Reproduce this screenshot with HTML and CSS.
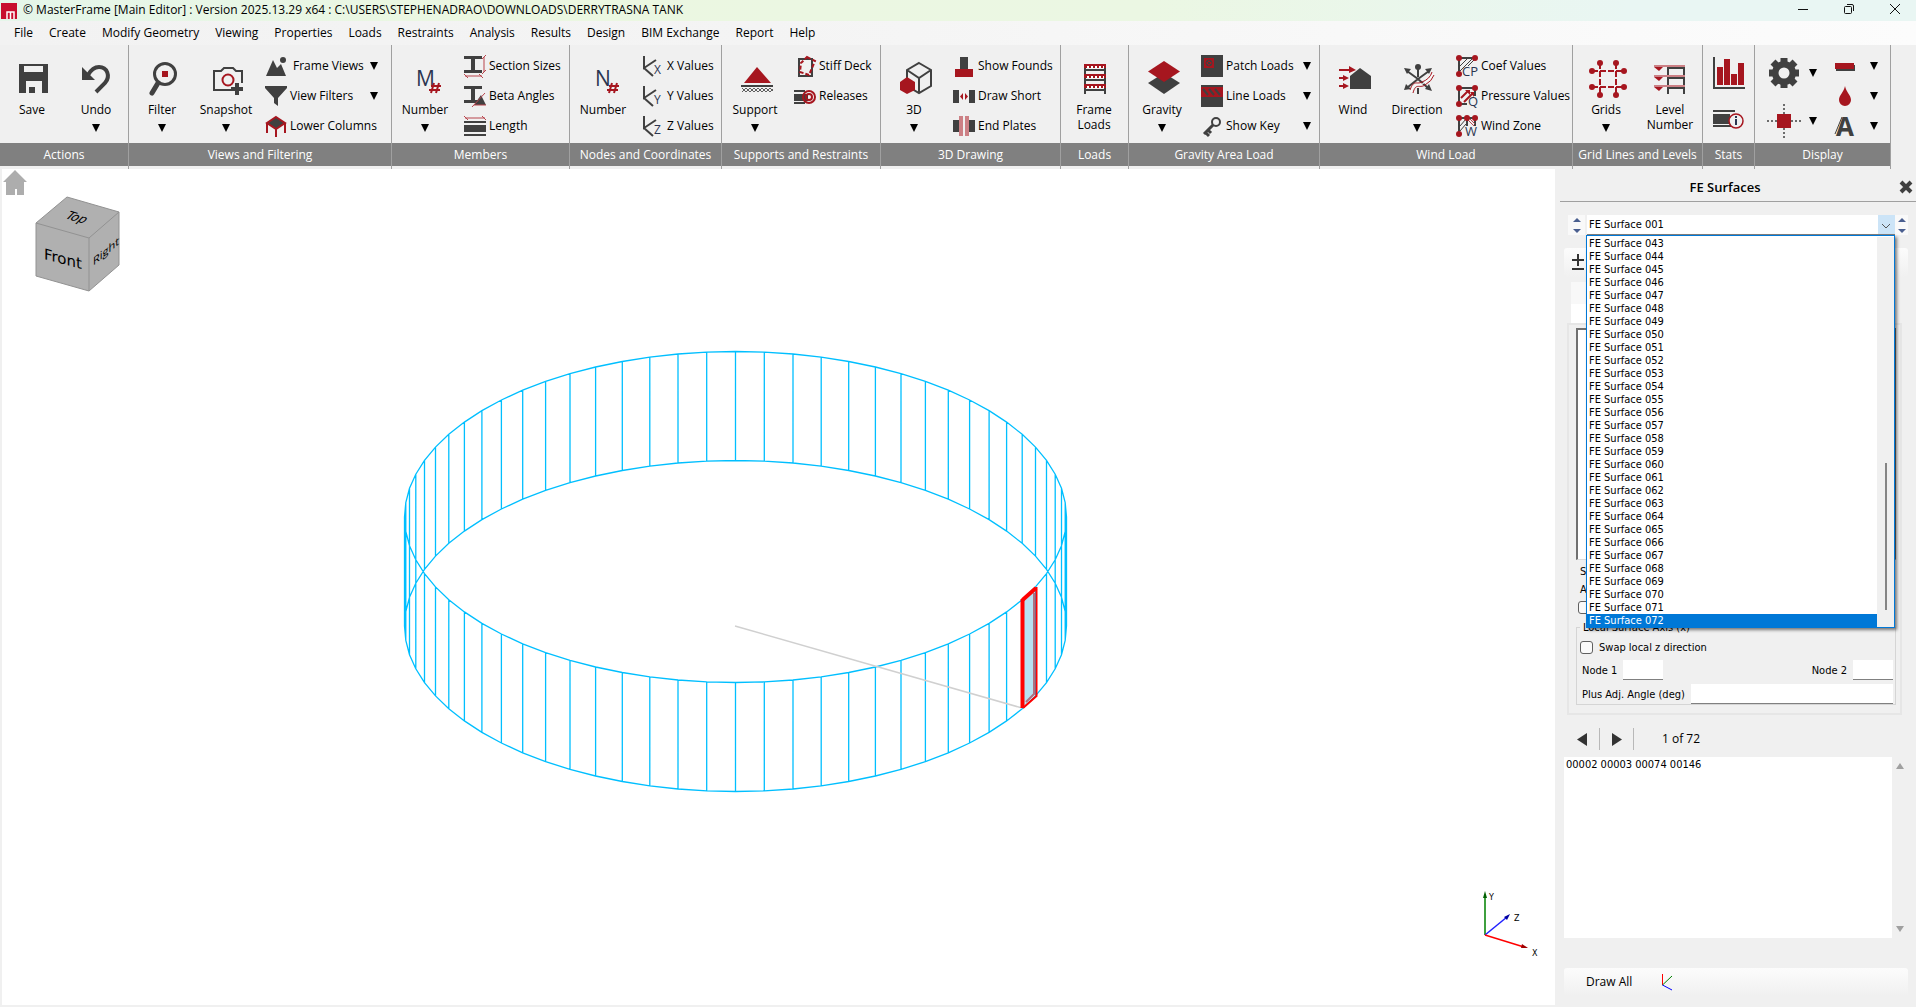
FILE: index.html
```html
<!DOCTYPE html>
<html lang="en">
<head>
<meta charset="utf-8">
<title>MasterFrame [Main Editor]</title>
<link rel="stylesheet" href="styles.css">
</head>
<body>
<svg class="defs" width="0" height="0" aria-hidden="true">
  <symbol id="down" viewBox="0 0 9 9"><path d="M0 0H9L4.500 9Z"/></symbol>
  <symbol id="beam" viewBox="0 0 22 22"><path class="ink" d="M0 1H18V4H11V15H18V18H0V15H7V4H0Z"/></symbol>
  <symbol id="axes" viewBox="0 0 22 22"><path class="line" d="M2 1V13L14 5M2 13L11 21"/></symbol>
</svg>

<header class="titlebar">
  <svg class="logo" viewBox="0 0 16 16"><path fill="#c8102e" d="M0 0H16V16H0Z"/><path d="M6 16V9H13V16M9.500 9V16" fill="none" stroke="#fff" stroke-width="1.500"/></svg>
  <h1>© MasterFrame [Main Editor] : Version 2025.13.29 x64 : C:\USERS\STEPHENADRAO\DOWNLOADS\DERRYTRASNA TANK</h1>
  <div class="window-controls">
    <button aria-label="Minimize"><svg viewBox="0 0 12 12"><path d="M1 6.500H11"/></svg></button>
    <button aria-label="Restore"><svg viewBox="0 0 12 12"><rect x="1.500" y="3.500" width="7" height="7" rx="1"/><path d="M4 1.500H9Q10.500 1.500 10.500 3V8"/></svg></button>
    <button aria-label="Close"><svg viewBox="0 0 12 12"><path d="M1 1L11 11M11 1L1 11"/></svg></button>
  </div>
</header>

<nav class="menubar">
  <a href="#">File</a><a href="#">Create</a><a href="#">Modify Geometry</a><a href="#">Viewing</a><a href="#">Properties</a><a href="#">Loads</a><a href="#">Restraints</a><a href="#">Analysis</a><a href="#">Results</a><a href="#">Design</a><a href="#">BIM Exchange</a><a href="#">Report</a><a href="#">Help</a>
</nav>

<div class="ribbon">
  <section class="group">
    <div class="tools">
      <button class="big"><svg viewBox="0 0 36 36"><path class="ink" fill-rule="evenodd" d="M5 3H34V32H28V20H12V32H5ZM10 5V11H29V5ZM15 26H21V32H15Z"/></svg><span>Save</span></button>
      <button class="big"><svg viewBox="0 0 36 36"><path class="ink" d="M4 6V19H17Z"/><path d="M10 14C14 7 18 6 21 6C29 6 33 15 27 22L18 31" fill="none" stroke="#404040" stroke-width="4"/></svg><span>Undo</span><svg class="arrow"><use href="#down"/></svg></button>
    </div>
    <h2>Actions</h2>
  </section>

  <section class="group">
    <div class="tools">
      <button class="big"><svg viewBox="0 0 36 36"><circle cx="21" cy="13" r="10.500" fill="none" stroke="#404040" stroke-width="3"/><path class="red" d="M18 10H24V16H18Z"/><path d="M14 22L8 32" stroke="#404040" stroke-width="5" stroke-linecap="round"/></svg><span>Filter</span><svg class="arrow"><use href="#down"/></svg></button>
      <button class="big"><svg viewBox="0 0 36 36"><path class="line" d="M24 29H6V10H13L16 7H25L28 10H34V22"/><circle cx="20" cy="19" r="5.500" fill="none" stroke="#a6161f" stroke-width="2"/><path d="M29 22V34M23 28H35" stroke="#404040" stroke-width="4"/></svg><span>Snapshot</span><svg class="arrow"><use href="#down"/></svg></button>
      <div class="stack">
        <button class="small wide-gap"><svg viewBox="0 0 22 22"><path class="ink" d="M1 21L8 5L12 13L16 9L21 21Z"/><circle class="ink" cx="18" cy="5" r="3"/></svg><span>Frame Views</span><svg class="arrow"><use href="#down"/></svg></button>
        <button class="small"><svg viewBox="0 0 22 22"><path class="ink" d="M0 1H22V3L13 13V21L9 18V13L0 3Z"/></svg><span>View Filters</span><svg class="arrow"><use href="#down"/></svg></button>
        <button class="small"><svg viewBox="0 0 22 22"><path d="M11 2L20 8L11 14L2 8Z" fill="#404040" stroke="#a6161f" stroke-width="2"/><path d="M2 8V18M11 14V22M20 8V18" stroke="#a6161f" stroke-width="2"/></svg><span>Lower Columns</span></button>
      </div>
    </div>
    <h2>Views and Filtering</h2>
  </section>

  <section class="group">
    <div class="tools">
      <button class="big"><svg viewBox="0 0 36 36"><text class="glyph" x="9" y="25">M</text><path class="hash" d="M27 22L24 32M32 22L29 32M24 25H34M22 29H33"/></svg><span>Number</span><svg class="arrow"><use href="#down"/></svg></button>
      <div class="stack">
        <button class="small"><svg viewBox="0 0 22 22"><use href="#beam"/><path class="thin" d="M20 2V17M18 4L22 0M18 19L22 15M1 21H18M0 19L4 23M15 19L19 23"/></svg><span>Section Sizes</span></button>
        <button class="small"><svg viewBox="0 0 22 22"><use href="#beam"/><path class="ink" d="M17 10L22 20H10Z"/><path class="thin" d="M8 22L21 8M10 20H22"/></svg><span>Beta Angles</span></button>
        <button class="small"><svg viewBox="0 0 22 22"><path class="thin" d="M1 3H21M0 1L4 5M18 1L22 5"/><path class="ink" d="M0 6H22V8H0ZM0 10H22V17H0ZM0 19H22V21H0Z"/></svg><span>Length</span></button>
      </div>
    </div>
    <h2>Members</h2>
  </section>

  <section class="group">
    <div class="tools">
      <button class="big"><svg viewBox="0 0 36 36"><text class="glyph" x="10" y="25">N</text><path class="hash" d="M27 22L24 32M32 22L29 32M24 25H34M22 29H33"/></svg><span>Number</span></button>
      <div class="stack">
        <button class="small"><svg viewBox="0 0 22 22"><use href="#axes"/><text class="sub" x="12" y="19">X</text></svg><span>X Values</span></button>
        <button class="small"><svg viewBox="0 0 22 22"><use href="#axes"/><text class="sub" x="12" y="19">Y</text></svg><span>Y Values</span></button>
        <button class="small"><svg viewBox="0 0 22 22"><use href="#axes"/><text class="sub" x="12" y="19">Z</text></svg><span>Z Values</span></button>
      </div>
    </div>
    <h2>Nodes and Coordinates</h2>
  </section>

  <section class="group">
    <div class="tools">
      <button class="big"><svg viewBox="0 0 36 36"><path class="red" d="M20 6L34 22H7Z"/><path class="line" d="M4 25H36"/><path d="M5 27L9 31L13 27L17 31L21 27L25 31L29 27L33 31L36 28M5 31L9 27L13 31L17 27L21 31L25 27L29 31L33 27L36 30" fill="none" stroke="#606060"/></svg><span>Support</span><svg class="arrow"><use href="#down"/></svg></button>
      <div class="stack">
        <button class="small"><svg viewBox="0 0 22 22"><path class="line" d="M5 4H18V21H5Z"/><path d="M13 2L21 6L15 20L6 17L7 8Z" fill="none" stroke="#a6161f" stroke-width="2" stroke-dasharray="4 2"/></svg><span>Stiff Deck</span></button>
        <button class="small"><svg viewBox="0 0 22 22"><path class="ink" d="M0 5H11V7H0ZM0 9H14V16H0ZM0 17H11V19H0Z"/><circle cx="15" cy="12" r="6" fill="none" stroke="#a6161f" stroke-width="2"/><circle cx="15" cy="12" r="3" fill="none" stroke="#a6161f" stroke-width="2"/></svg><span>Releases</span></button>
      </div>
    </div>
    <h2>Supports and Restraints</h2>
  </section>

  <section class="group">
    <div class="tools">
      <button class="big"><svg viewBox="0 0 36 36"><path class="line" d="M23 2L35 9V25L23 32L11 25V9ZM11 9L23 17L35 9M23 17V32"/><path class="red" d="M11 16L19 21V29L11 33L4 29V21Z"/></svg><span>3D</span><svg class="arrow"><use href="#down"/></svg></button>
      <div class="stack">
        <button class="small"><svg viewBox="0 0 22 22"><path class="ink" d="M7 2H15V14H7Z"/><path class="red" d="M2 14H20V22H2Z"/></svg><span>Show Founds</span></button>
        <button class="small"><svg viewBox="0 0 22 22"><path class="ink" d="M0 5H6V18H0ZM16 5H22V18H16Z"/><path class="red" d="M10 8V15L7 11.500ZM12 8V15L15 11.500Z"/></svg><span>Draw Short</span></button>
        <button class="small"><svg viewBox="0 0 22 22"><path class="ink" d="M0 5H6V17H0ZM16 5H22V17H16Z"/><path fill="#cc8085" d="M6 1H10V21H6ZM12 1H16V21H12Z"/></svg><span>End Plates</span></button>
      </div>
    </div>
    <h2>3D Drawing</h2>
  </section>

  <section class="group">
    <div class="tools">
      <button class="big"><svg viewBox="0 0 36 36"><path class="line" d="M9 4V33M29 4V33M9 9H29M9 19H29M9 29H29"/><path d="M8 5H30M8 15H30M8 25H30" stroke="#a6161f" stroke-width="4"/><path d="M11 6H28M11 16H28M11 26H28" stroke="#fff" stroke-width="2" stroke-dasharray="2 2"/></svg><span>Frame<br>Loads</span></button>
    </div>
    <h2>Loads</h2>
  </section>

  <section class="group">
    <div class="tools">
      <button class="big"><svg viewBox="0 0 36 36"><path class="ink" d="M20 12L36 22L20 33L4 22Z"/><path class="red" d="M20 0L36 10.500L20 21L4 10.500Z"/></svg><span>Gravity</span><svg class="arrow"><use href="#down"/></svg></button>
      <div class="stack tight">
        <button class="small"><svg viewBox="0 0 22 22"><path class="ink" d="M0 0H22V22H0Z"/><path class="red" d="M3 3H13V13H3Z"/><circle cx="8" cy="8" r="3" fill="none" stroke="#404040"/><path d="M6 6L10 10M10 6L6 10" stroke="#404040"/></svg><span>Patch Loads</span><svg class="arrow"><use href="#down"/></svg></button>
        <button class="small"><svg viewBox="0 0 22 22"><path class="ink" d="M0 0H22V22H0Z"/><path class="red" d="M0 2H22V12H0Z"/><path d="M2 4L7 10M8 4L13 10M14 4L19 10" stroke="#404040" stroke-width="2"/></svg><span>Line Loads</span><svg class="arrow"><use href="#down"/></svg></button>
        <button class="small"><svg viewBox="0 0 22 22"><circle class="line" cx="15" cy="7" r="4"/><path d="M12 10L3 19M7 15L10 18M4 17L8 21" stroke="#404040" stroke-width="3"/></svg><span>Show Key</span><svg class="arrow"><use href="#down"/></svg></button>
      </div>
    </div>
    <h2>Gravity Area Load</h2>
  </section>

  <section class="group">
    <div class="tools">
      <button class="big"><svg viewBox="0 0 36 36"><path class="ink" d="M25 7L36 15V28H15V15Z"/><path d="M4 9H16M4 17H10M4 25H10" stroke="#a6161f" stroke-width="2"/><path class="red" d="M14 5L21 9L14 12ZM8 14L14 17L8 20ZM8 22L14 25L8 28Z"/></svg><span>Wind</span></button>
      <button class="big"><svg viewBox="0 0 36 36"><path class="line" d="M19 5V16M19 27V33M19 18L8 10M19 18L30 10M19 18L9 26M19 18L29 27"/><circle class="ink" cx="19" cy="6" r="3"/><path class="ink" d="M5 7L12 8L8 13ZM33 7L30 13L26 8ZM5 29L7 23L12 28ZM33 30L26 28L30 23Z"/><path d="M11 29C15 18 17 24 23 21Q31 18 33 11M14 32C17 21 20 28 26 24Q33 20 35 14" fill="none" stroke="#a6161f" stroke-width="1"/><path d="M12 31C16 20 18 26 25 22Q32 18 34 13" fill="none" stroke="#fff" stroke-width="1"/></svg><span>Direction</span><svg class="arrow"><use href="#down"/></svg></button>
      <div class="stack">
        <button class="small"><svg viewBox="0 0 22 22"><path class="line" d="M3 3H19M3 3V20"/><path class="hatch" d="M4 11L11 4M4 16L16 4M12 11L18 5"/><g class="red"><circle cx="3" cy="3" r="3"/><circle cx="19" cy="3" r="3"/><circle cx="3" cy="19" r="3"/></g><text class="code" x="6" y="21">CP</text></svg><span>Coef Values</span></button>
        <button class="small"><svg viewBox="0 0 22 22"><path class="line" d="M3 3H19M3 3V20M3 19H11M19 3V11"/><path d="M5 13L12 6M8 17L17 8" stroke="#a6161f" stroke-width="2"/><g class="red"><path d="M9 5H14V10ZM14 7H18V12Z"/><circle cx="3" cy="3" r="3"/><circle cx="19" cy="3" r="3"/><circle cx="3" cy="19" r="3"/></g><text class="code" x="12" y="21">Q</text></svg><span>Pressure Values</span></button>
        <button class="small"><svg viewBox="0 0 22 22"><path class="line" d="M3 3H19M3 3V20M11 3V11M19 3V11"/><path class="hatch" d="M4 11L10 4M4 16L10 9"/><path class="thin" d="M12 5L18 11M14 4L19 9"/><g class="red"><circle cx="3" cy="3" r="3"/><circle cx="11" cy="3" r="3"/><circle cx="19" cy="3" r="3"/><circle cx="3" cy="19" r="3"/></g><text class="code" x="9" y="21">W</text></svg><span>Wind Zone</span></button>
      </div>
    </div>
    <h2>Wind Load</h2>
  </section>

  <section class="group">
    <div class="tools">
      <button class="big"><svg viewBox="0 0 36 36"><path d="M12 2V34M28 2V34M4 10H36M4 26H36" stroke="#a6161f" stroke-width="2" stroke-dasharray="6 2"/><g class="red"><circle cx="12" cy="2" r="3"/><circle cx="28" cy="2" r="3"/><circle cx="12" cy="34" r="3"/><circle cx="28" cy="34" r="3"/><circle cx="4" cy="10" r="3"/><circle cx="36" cy="10" r="3"/><circle cx="4" cy="26" r="3"/><circle cx="36" cy="26" r="3"/></g></svg><span>Grids</span><svg class="arrow"><use href="#down"/></svg></button>
      <button class="big"><svg viewBox="0 0 36 36"><path class="line" d="M16 33V7H32V33M16 17H32M16 27H32"/><path d="M2 5H33M2 15H33M2 25H33" stroke="#cc8085" stroke-width="2"/><path class="red" d="M2 6H11L7 10ZM2 16H11L7 20ZM2 26H11L7 30Z"/></svg><span>Level<br>Number</span></button>
    </div>
    <h2>Grid Lines and Levels</h2>
  </section>

  <section class="group">
    <div class="tools pair">
      <button aria-label="Statistics"><svg viewBox="0 0 34 34"><path class="line" d="M2 1V32H33"/><path class="red" d="M5 11H11V29H5ZM12 3H18V29H12ZM19 18H25V29H19ZM26 7H32V29H26Z"/></svg></button>
      <button aria-label="Member information"><svg viewBox="0 0 34 34"><path class="ink" d="M1 6H23V8H1ZM1 10H18V20H1ZM1 21H20V23H1Z"/><circle cx="24" cy="17" r="7" fill="#f0f0f0" stroke="#a6161f" stroke-width="1.500"/><path d="M24 15V21M24 12V14" stroke="#2b3550" stroke-width="2"/></svg></button>
    </div>
    <h2>Stats</h2>
  </section>

  <section class="group">
    <div class="tools display">
      <div class="pair">
        <button aria-label="Settings"><svg viewBox="0 0 34 34"><path d="M17 2V32M2 17H32M6 6L28 28M28 6L6 28" stroke="#404040" stroke-width="7"/><circle class="ink" cx="17" cy="17" r="12"/><circle cx="17" cy="17" r="5.500" fill="#f0f0f0"/></svg><svg class="arrow"><use href="#down"/></svg></button>
        <button aria-label="Node display"><svg viewBox="0 0 34 34"><path d="M17 0V34M0 17H34" stroke="#404040" stroke-width="1.500" stroke-dasharray="2 2"/><path class="red" d="M10 10H24V24H10Z"/></svg><svg class="arrow"><use href="#down"/></svg></button>
      </div>
      <div class="stack">
        <button class="small" aria-label="Line display"><svg viewBox="0 0 22 22"><path class="ink" d="M2 10H21V16H2Z"/><path class="red" d="M1 8H20V14H1Z"/></svg><svg class="arrow"><use href="#down"/></svg></button>
        <button class="small" aria-label="Colour"><svg viewBox="0 0 22 22"><path class="red" d="M11 1C12 7 17 10 17 15A6 6 0 0 1 5 15C5 10 10 7 11 1Z"/></svg><svg class="arrow"><use href="#down"/></svg></button>
        <button class="small" aria-label="Text"><svg viewBox="0 0 22 22"><path d="M1 19L8 2" stroke="#404040"/><text class="letter" x="2" y="21">A</text></svg><svg class="arrow"><use href="#down"/></svg></button>
      </div>
    </div>
    <h2>Display</h2>
  </section>
</div>

<main class="workspace">
  <div class="viewport">
    <svg id="scene" class="scene" viewBox="0 0 1553 836" role="img" aria-label="Tank wall surfaces">
      <path id="wall" class="wall"/>
      <path d="M733 457L1020 539" stroke="#d0d0d0" stroke-width="1.500"/>
      <path d="M1021 431L1033 420V526L1021 538Z" fill="#b8e1f2"/>
      <path d="M1032 424V525L1024 533" fill="none" stroke="#b07080" stroke-width="2"/>
      <path d="M1020.500 431L1034 419" stroke="#f00" stroke-width="4"/>
      <path d="M1020.500 430V539" stroke="#f00" stroke-width="4"/>
      <path d="M1034.500 418V527L1021 539" fill="none" stroke="#f00" stroke-width="2"/>
    </svg>
    <button class="home" aria-label="Home view"><svg viewBox="0 0 24 25"><path fill="#adadad" d="M12 0L24 12H21V25H14V19H12V25H3V12H0Z"/></svg></button>
    <svg class="cube" viewBox="0 0 86 96" role="img" aria-label="View cube">
      <path d="M32 1L84 16V69L54 95L1 80V27Z" fill="#b0b0b0"/>
      <path d="M32 1L84 16V69L54 95L1 80V27ZM1 27L54 42L84 16M54 42V95" fill="none" stroke="#929292"/>
      <text transform="translate(9 63) skewY(15)" font-size="15">Front</text>
      <text class="side" transform="translate(58 70) skewY(-40)" font-size="11">Right</text>
      <text transform="translate(29 22) rotate(16) skewX(-28)" font-size="12">Top</text>
    </svg>
    <svg class="triad" viewBox="0 0 60 70" role="img" aria-label="Axes">
      <path d="M7 46V6" stroke="#3fa03f" stroke-width="2"/><path d="M5 9L7 2L9 9Z" fill="#006000"/>
      <path d="M7 46L29 28" stroke="#2020ff" stroke-width="1.500"/><path d="M32 25L29 31L26 28Z" fill="#0000a0"/>
      <path d="M7 46L46 58" stroke="#f00" stroke-width="1.500"/><path d="M50 59L43 59L44 55Z" fill="#a00000"/>
      <text x="11" y="11">Y</text><text x="36" y="32">Z</text><text x="54" y="67">X</text>
    </svg>
  </div>

  <aside class="panel">
    <header class="panel-head"><h2>FE Surfaces</h2><button aria-label="Close panel"><svg viewBox="0 0 12 12"><path d="M1 1L11 11M11 1L1 11" stroke="#404040" stroke-width="4"/></svg></button></header>

    <div class="picker">
      <button class="spin" aria-label="Previous or next surface"><svg viewBox="0 0 8 15"><path d="M0 4L4 0L8 4ZM0 11L4 15L8 11Z"/></svg></button>
      <div class="combo">
        <select aria-label="FE surface"><option>FE Surface 001</option></select>
        <svg class="chevron" viewBox="0 0 8 5"><path d="M0 0L4 4L8 0" fill="none" stroke="#555"/></svg>
        <div class="popup"><ul id="surfaces" role="listbox" aria-label="Surfaces"></ul><div class="track"><i></i></div></div>
      </div>
      <button class="spin" aria-label="First or last surface"><svg viewBox="0 0 8 15"><path d="M0 4L4 0L8 4ZM0 11L4 15L8 11Z"/></svg></button>
    </div>

    <div class="strip"><button aria-label="Add or remove"><svg viewBox="0 0 12 17"><path d="M0 6H12M6 0V12M0 15H12" stroke="#333" stroke-width="2"/></svg></button></div>
    <div class="tabs"></div>

    <div class="frame">
      <div class="members"></div>
      <p>St</p>
      <p>Ar</p>
      <input type="checkbox" aria-label="Apply">
      <fieldset>
        <legend>Local Surface Axis (x)</legend>
        <label class="check"><input type="checkbox">Swap local z direction</label>
        <div class="nodes"><label>Node 1<input type="text"></label><label>Node 2<input type="text"></label></div>
        <label class="angle">Plus Adj. Angle (deg)<input type="text"></label>
      </fieldset>
    </div>

    <div class="pager">
      <button aria-label="Previous"><svg viewBox="0 0 10 13"><path d="M10 0V13L0 6.500Z"/></svg></button>
      <button aria-label="Next"><svg viewBox="0 0 10 13"><path d="M0 0V13L10 6.500Z"/></svg></button>
      <span>1 of 72</span>
    </div>
    <div class="output">
      <textarea aria-label="Nodes of the surface">00002 00003 00074 00146</textarea>
      <div class="scroll"><svg viewBox="0 0 8 6"><path d="M4 0L8 6H0Z"/></svg><svg viewBox="0 0 8 6"><path d="M0 0H8L4 6Z"/></svg></div>
    </div>
    <div class="strip foot"><button>Draw All</button><svg viewBox="0 0 10 16"><path d="M.5 0V11" stroke="#f00"/><path d="M.5 11L10 2" stroke="#008000"/><path d="M.5 11L10 16" stroke="#00f"/></svg></div>
  </aside>
</main>
<script src="app.js"></script>
</body>
</html>
```
FILE: styles.css
```css
* { box-sizing: border-box; }
body {
  margin: 0;
  min-height: 100vh;
  display: flex;
  flex-direction: column;
  background: #f0f0f0;
  color: #000;
  font: 12px/16px "Open Sans", "Noto Sans", sans-serif;
}
h1, h2, p, ul { margin: 0; padding: 0; font: inherit; }
button { border: 0; padding: 0; background: none; font: inherit; color: inherit; }
svg { display: block; flex: none; overflow: visible; }
.defs { position: absolute; }

.titlebar {
  display: flex;
  align-items: center;
  height: 21px;
  background: linear-gradient(90deg, #e5f6ea, #ebf7e1 25%, #ebf7e3 60%, #e9f6f3 85%);
}
.logo { width: 16px; height: 16px; margin: 0 6px 0 1px; }
.titlebar h1 { flex: 1; white-space: nowrap; line-height: 18px; padding-bottom: 2px; }
.window-controls { display: flex; gap: 34px; padding: 0 15px 4px 0; }
.window-controls svg { width: 12px; height: 12px; fill: none; stroke: #111; }

.menubar {
  display: flex;
  gap: 16px;
  height: 24px;
  padding: 4px 14px;
  background: linear-gradient(90deg, #f2f2f2, #f4f4f4 40%, #fcfcfc);
}
.menubar a { color: #000; text-decoration: none; white-space: nowrap; }

.ribbon {
  display: grid;
  grid-template-columns: 129px 263px 178px 152px 159px 180px 68px 191px 253px 130px 52px 136px;
  height: 124px;
}
.group { display: flex; flex-direction: column; border-right: 1px solid #a0a0a0; min-width: 0; padding-bottom: 3px; }
.group h2 {
  height: 23px;
  line-height: 23px;
  text-align: center;
  white-space: nowrap;
  color: #fff;
  background: #808080;
}
.tools { flex: 1; display: flex; padding-left: 1px; }
.group:first-child .tools { padding-left: 0; }
.big { flex: none; width: 64px; display: flex; flex-direction: column; align-items: center; padding-top: 16px; line-height: 15px; }
.big > svg:first-child { width: 36px; height: 36px; margin-bottom: 5px; }
.arrow, .big > .arrow { width: 8px; height: 8px; }
.big > .arrow { margin-top: 7px; }
.stack { flex: 1; display: flex; flex-direction: column; padding: 6px 13px 0 7px; }
.stack.tight { padding-right: 8px; }
.small { display: flex; align-items: center; gap: 3px; height: 30px; white-space: nowrap; }
.small > svg:first-child { width: 22px; height: 22px; }
.small .arrow { margin-left: auto; }
.wide-gap { gap: 6px; }
.pair { display: flex; flex-direction: column; gap: 14px; padding: 11px 0 0 9px; }
.pair svg { width: 34px; height: 34px; }
.pair button { display: flex; align-items: center; gap: 8px; }
.pair .arrow { width: 8px; height: 8px; }
.display { padding-left: 0; }
.display .pair { padding-left: 12px; }
.display .stack { padding-left: 17px; padding-right: 12px; }

.ink { fill: #404040; }
.red { fill: #a6161f; }
.line { fill: none; stroke: #404040; stroke-width: 2; }
.thin { fill: none; stroke: #b8454c; }
.hatch { fill: none; stroke: #404040; }
.hash { fill: none; stroke: #a6161f; stroke-width: 2; }
.glyph { font-size: 21px; fill: #2b3550; }
.sub { font-size: 12px; fill: #2b3550; }
.code { font-size: 13px; fill: #2b3550; }
.letter { font-size: 26px; font-weight: 700; fill: #404040; }

.workspace { flex: 1; display: flex; padding-left: 2px; }
.viewport { flex: 1; position: relative; min-width: 0; margin-bottom: 2px; background: #fff; }
.scene { width: 100%; height: 100%; }
.wall { fill: none; stroke: #00bfff; stroke-width: 1.3; }
.home { position: absolute; left: 1px; top: 1px; width: 24px; height: 25px; }
.cube { position: absolute; left: 33px; top: 27px; width: 86px; height: 96px; font-family: "DejaVu Sans", sans-serif; }
.side { font-family: "Open Sans", sans-serif; }
.triad { position: absolute; right: 17px; bottom: 46px; width: 60px; height: 70px; font: 8px "DejaVu Sans", sans-serif; }

.panel {
  width: 361px;
  display: flex;
  flex-direction: column;
  padding: 0 8px 11px 9px;
  font: 11px/13px "DejaVu Sans Condensed", "DejaVu Sans", sans-serif;
}
.panel-head {
  display: flex;
  align-items: center;
  height: 33px;
  margin: 0 -8px 0 -4px;
  padding: 3px 4px 0 0;
  border-bottom: 1px solid #a0a0a0;
}
.panel-head h2 { flex: 1; padding-right: 10px; text-align: center; font: 600 13px/20px "Open Sans", sans-serif; }
.panel-head svg { width: 12px; height: 12px; }

.picker { display: flex; height: 20px; margin: 13px 0 0 4px; }
.spin { width: 17px; background: #f9f9f9; display: flex; align-items: center; justify-content: center; }
.spin svg { width: 8px; height: 15px; fill: #4a5f8f; }
.combo { flex: 1; position: relative; margin-left: 2px; }
.spin:last-child { width: 13px; }
.combo select {
  appearance: none;
  display: block;
  width: 100%;
  height: 20px;
  border: 0;
  border-bottom: 1px solid #808080;
  border-radius: 0;
  padding: 0 2px;
  background: linear-gradient(#cce4f7, #cce4f7) right / 17px 100% no-repeat #fff;
  font: inherit;
  color: #000;
}
.combo .chevron { position: absolute; right: 5px; top: 9px; width: 8px; height: 5px; }
.popup {
  position: absolute;
  z-index: 2;
  left: -1px;
  right: 0;
  top: 20px;
  display: flex;
  padding-top: 1px;
  border: 1px solid #0078d7;
  box-shadow: 2px 2px 3px rgba(0, 0, 0, .5);
  background: #fff;
}
.popup ul { flex: 1; list-style: none; }
.popup li { padding-left: 2px; }
.popup li[aria-selected="true"] { background: #0078d7; color: #fff; }
.track { width: 17px; padding: 226px 0 17px 8px; background: #f0f0f0; }
.track i { display: block; width: 2px; height: 100%; background: #858585; }

.strip {
  display: flex;
  align-items: center;
  height: 29px;
  margin-top: 13px;
  padding-left: 8px;
  border-radius: 3px;
  background: linear-gradient(#fcfcfc, #f0f0f0);
}
.strip button svg { width: 12px; height: 17px; }
.tabs { height: 41px; margin: 5px 14px 0 7px; background: linear-gradient(#f8f8f8 22px, #fff 22px); }
.frame {
  display: flex;
  flex-direction: column;
  align-items: stretch;
  margin: 0 6px 0 3px;
  padding: 3px 4px 8px 7px;
  border: 2px solid #e6e6e6;
  height: 392px;
}
.members { height: 233px; background: #fff; border: 2px solid #707070; border-right-width: 1px; border-bottom: 1px solid #ddd; }
.frame p { padding: 5px 0 0 4px; height: 18px; }
input[type="checkbox"] { appearance: none; width: 13px; height: 13px; margin: 0; border: 1px solid #606060; border-radius: 3px; background: #fafafa; flex: none; }
.frame > input { margin: 5px 0 0 2px; }
fieldset { min-width: 0; margin: 7px 0 0; padding: 7px 2px 0 3px; border: 1px solid #d5d5d5; flex: 1; }
legend { padding: 0 3px; }
.check { display: flex; align-items: center; gap: 6px; }
.nodes { display: flex; justify-content: space-between; margin-top: 6px; }
.nodes label, .angle { display: flex; align-items: center; gap: 6px; padding-left: 2px; white-space: nowrap; }
.angle { margin-top: 4px; }
input[type="text"] { height: 20px; width: 40px; border: 0; border-bottom: 1px solid #808080; background: #fff; }
.angle input { flex: 1; min-width: 0; }

.pager { display: flex; align-items: center; height: 24px; margin-top: 12px; }
.pager button { width: 36px; height: 22px; display: flex; align-items: center; justify-content: center; border-right: 1px solid #b8b8b8; }
.pager button + button { width: 34px; }
.pager svg { width: 10px; height: 13px; fill: #333; }
.pager span { margin-left: 28px; font: 12px/16px "Open Sans", sans-serif; }
.output { flex: 1; display: flex; margin-top: 6px; }
.output textarea { flex: 1; border: 0; resize: none; padding: 1px 2px; background: #fff; font: inherit; color: inherit; }
.scroll { width: 16px; display: flex; flex-direction: column; justify-content: space-between; align-items: center; padding: 6px 0; }
.scroll svg { width: 8px; height: 6px; fill: #a0a0a0; }
.foot { margin-top: 30px; height: 28px; padding-left: 22px; gap: 30px; font: 12px/16px "Open Sans", sans-serif; }
.foot svg { width: 10px; height: 16px; }
```
FILE: app.js
```js
// Tank wall: 72 panels between an upper and a lower ring.
const CX = 733.5, RX = 331, RY = 165.5, TOP = 348, BOTTOM = 457, PANELS = 72;
let upper = '', lower = '', posts = '';
for (let i = 0; i < PANELS; i++) {
  const a = (i * 2 * Math.PI) / PANELS;
  const x = (CX + RX * Math.cos(a)).toFixed(1);
  const y = RY * Math.sin(a);
  const step = i ? 'L' : 'M';
  upper += `${step}${x} ${(TOP + y).toFixed(1)}`;
  lower += `${step}${x} ${(BOTTOM + y).toFixed(1)}`;
  posts += `M${x} ${(TOP + y).toFixed(1)}V${(BOTTOM + y).toFixed(1)}`;
}
document.getElementById('wall').setAttribute('d', `${upper}Z${lower}Z${posts}`);

// Visible part of the surface list, scrolled to its end.
const list = document.getElementById('surfaces');
for (let n = 43; n <= 72; n++) {
  const item = document.createElement('li');
  item.setAttribute('role', 'option');
  item.setAttribute('aria-selected', String(n === 72));
  item.textContent = `FE Surface ${String(n).padStart(3, '0')}`;
  list.append(item);
}
```
